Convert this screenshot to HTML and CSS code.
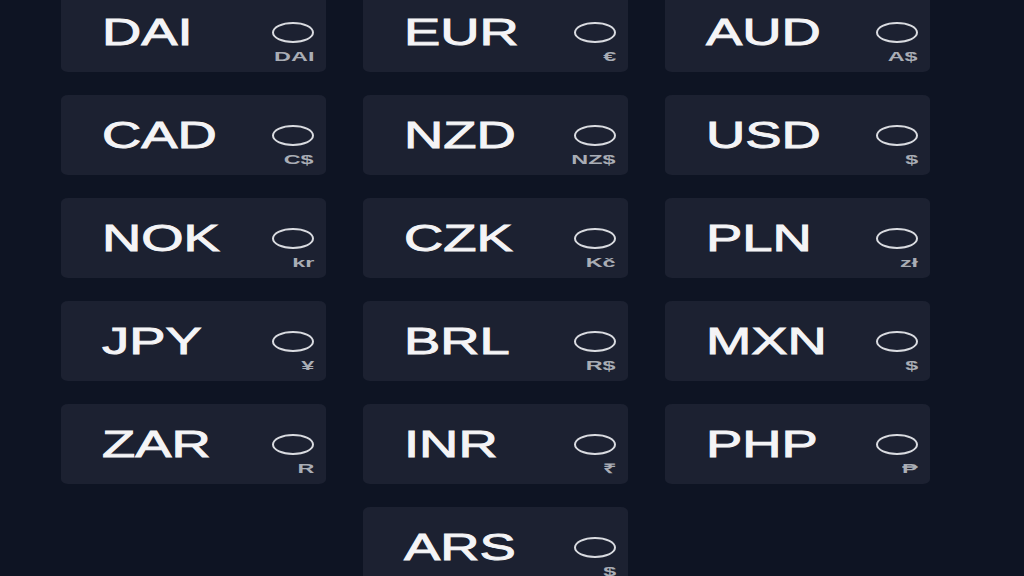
FILE: index.html
```html
<!DOCTYPE html>
<html lang="en">
<head>
<meta charset="utf-8">
<title>Currencies</title>
<link rel="stylesheet" href="styles.css">
</head>
<body>
<main class="currency-grid">
  <div class="card"><span class="code">DAI</span><span class="pick"><span class="radio"></span><span class="sym">DAI</span></span></div>
  <div class="card"><span class="code">EUR</span><span class="pick"><span class="radio"></span><span class="sym">€</span></span></div>
  <div class="card"><span class="code">AUD</span><span class="pick"><span class="radio"></span><span class="sym">A$</span></span></div>
  <div class="card"><span class="code">CAD</span><span class="pick"><span class="radio"></span><span class="sym">C$</span></span></div>
  <div class="card"><span class="code">NZD</span><span class="pick"><span class="radio"></span><span class="sym">NZ$</span></span></div>
  <div class="card"><span class="code">USD</span><span class="pick"><span class="radio"></span><span class="sym">$</span></span></div>
  <div class="card"><span class="code">NOK</span><span class="pick"><span class="radio"></span><span class="sym">kr</span></span></div>
  <div class="card"><span class="code">CZK</span><span class="pick"><span class="radio"></span><span class="sym">Kč</span></span></div>
  <div class="card"><span class="code">PLN</span><span class="pick"><span class="radio"></span><span class="sym">zł</span></span></div>
  <div class="card"><span class="code">JPY</span><span class="pick"><span class="radio"></span><span class="sym">¥</span></span></div>
  <div class="card"><span class="code">BRL</span><span class="pick"><span class="radio"></span><span class="sym">R$</span></span></div>
  <div class="card"><span class="code">MXN</span><span class="pick"><span class="radio"></span><span class="sym">$</span></span></div>
  <div class="card"><span class="code">ZAR</span><span class="pick"><span class="radio"></span><span class="sym">R</span></span></div>
  <div class="card"><span class="code">INR</span><span class="pick"><span class="radio"></span><span class="sym">₹</span></span></div>
  <div class="card"><span class="code">PHP</span><span class="pick"><span class="radio"></span><span class="sym">₱</span></span></div>
  <div class="card card-center"><span class="code">ARS</span><span class="pick"><span class="radio"></span><span class="sym">$</span></span></div>
</main>
</body>
</html>
```
FILE: styles.css
```css
html, body {
  margin: 0;
  padding: 0;
  background: #0e1423;
  overflow: hidden;
  height: 576px;
}

body {
  font-family: "Liberation Sans", Arial, sans-serif;
  color: #f4f4f6;
}

.currency-grid {
  display: grid;
  grid-template-columns: repeat(3, 265px);
  grid-auto-rows: 80px;
  column-gap: 37px;
  row-gap: 23px;
  padding-left: 61px;
  margin-top: -8px;
}

.card {
  background: #1c2131;
  border-radius: 7px / 5px;
  display: flex;
  align-items: center;
  justify-content: space-between;
  padding: 0 12px 0 41px;
}

.card-center {
  grid-column: 2;
}

.code {
  font-size: 37px;
  line-height: 1;
  font-weight: 400;
  transform: scaleX(1.47);
  transform-origin: left center;
  -webkit-text-stroke: 0.9px #f4f4f6;
}

.pick {
  display: flex;
  flex-direction: column;
  align-items: flex-end;
  padding-top: 21px;
  gap: 7px;
}

.radio {
  width: 38px;
  height: 17px;
  border: 2px solid #d9dbe0;
  border-radius: 50%;
}

.sym {
  font-size: 13px;
  line-height: 13px;
  font-weight: 700;
  color: #a9adb5;
  transform: scaleX(1.8);
  transform-origin: right center;
}
```
